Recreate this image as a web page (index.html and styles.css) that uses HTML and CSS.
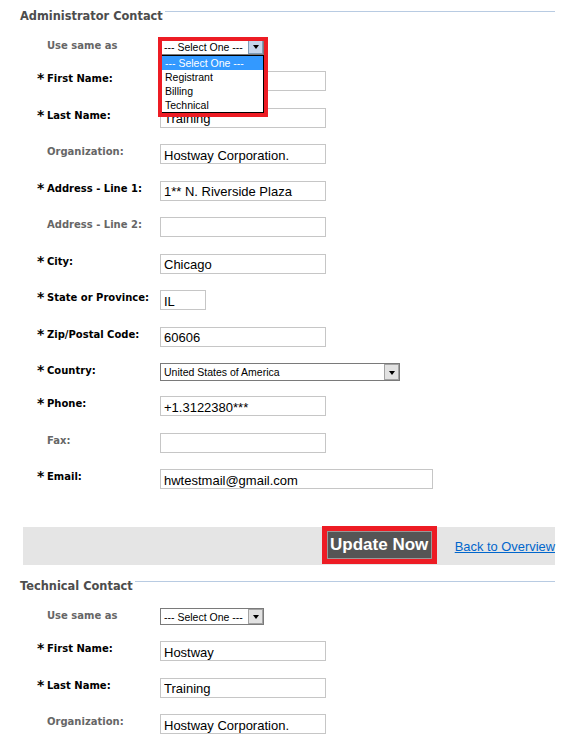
FILE: index.html
```html
<!DOCTYPE html>
<html lang="en">
<head>
    <meta charset="UTF-8">
    <title>Contact Details</title>
    <link rel="stylesheet" href="styles.css">
</head>
<body>

    <div class="page">

        <!-- Administrator contact -->
        <h3 class="legend">Administrator Contact</h3>
        <div class="rows">
            <div class="row row-select">
                <label class="label opt">Use same as</label>
                <div class="select open">
                    <span class="select-text">--- Select One ---</span>
                    <span class="arrow"></span>
                    <ul class="options">
                        <li class="active">--- Select One ---</li>
                        <li>Registrant</li>
                        <li>Billing</li>
                        <li>Technical</li>
                    </ul>
                    <div class="mark"></div>
                </div>
            </div>
            <div class="row">
                <label class="label"><span class="star">*</span>First Name:</label>
                <input class="field" type="text" value="Hostway">
            </div>
            <div class="row">
                <label class="label"><span class="star">*</span>Last Name:</label>
                <input class="field" type="text" value="Training">
            </div>
            <div class="row">
                <label class="label opt">Organization:</label>
                <input class="field" type="text" value="Hostway Corporation.">
            </div>
            <div class="row">
                <label class="label"><span class="star">*</span>Address - Line 1:</label>
                <input class="field" type="text" value="1** N. Riverside Plaza">
            </div>
            <div class="row">
                <label class="label opt">Address - Line 2:</label>
                <input class="field" type="text" value="">
            </div>
            <div class="row">
                <label class="label"><span class="star">*</span>City:</label>
                <input class="field" type="text" value="Chicago">
            </div>
            <div class="row">
                <label class="label"><span class="star">*</span>State or Province:</label>
                <input class="field field-short" type="text" value="IL">
            </div>
            <div class="row">
                <label class="label"><span class="star">*</span>Zip/Postal Code:</label>
                <input class="field" type="text" value="60606">
            </div>
            <div class="row row-country">
                <label class="label"><span class="star">*</span>Country:</label>
                <div class="select select-wide">
                    <span class="select-text">United States of America</span>
                    <span class="arrow"></span>
                </div>
            </div>
            <div class="row">
                <label class="label"><span class="star">*</span>Phone:</label>
                <input class="field" type="text" value="+1.3122380***">
            </div>
            <div class="row">
                <label class="label opt">Fax:</label>
                <input class="field" type="text" value="">
            </div>
            <div class="row">
                <label class="label"><span class="star">*</span>Email:</label>
                <input class="field field-long" type="text" value="hwtestmail@gmail.com">
            </div>
        </div>

        <div class="actions">
            <button class="update-btn">Update Now</button>
            <a class="back-link" href="#">Back to Overview</a>
        </div>

        <!-- Technical contact -->
        <h3 class="legend legend-next">Technical Contact</h3>
        <div class="rows">
            <div class="row row-select">
                <label class="label opt">Use same as</label>
                <div class="select">
                    <span class="select-text">--- Select One ---</span>
                    <span class="arrow"></span>
                </div>
            </div>
            <div class="row">
                <label class="label"><span class="star">*</span>First Name:</label>
                <input class="field" type="text" value="Hostway">
            </div>
            <div class="row">
                <label class="label"><span class="star">*</span>Last Name:</label>
                <input class="field" type="text" value="Training">
            </div>
            <div class="row">
                <label class="label opt">Organization:</label>
                <input class="field" type="text" value="Hostway Corporation.">
            </div>
        </div>

    </div>

</body>
</html>
```

FILE: styles.css
```css
html {
    overflow: hidden;
}

body {
    margin: 0;
    padding: 0;
    background: #fff;
    color: #000;
    font-family: 'DejaVu Sans', Verdana, sans-serif;
}

.page {
    width: 555px;
}

/* section headings with the rule running to the right */
.legend {
    display: flex;
    align-items: flex-start;
    margin: 9px 0 0;
    padding-left: 20px;
    font-size: 11.4px;
    line-height: 14px;
    font-weight: bold;
    color: #4d4d4d;
}

.legend::after {
    content: "";
    flex: 1;
    margin: 2px 0 0 2px;
    border-top: 1px solid #b8cbe2;
}

.legend-next {
    margin-top: 14px;
}

.rows {
    margin-top: 7px;
}

.row {
    display: flex;
    align-items: flex-start;
    padding: 8px 0 8.5px 37px;
}

.row-select {
    padding-bottom: 8px;
}

.row-country {
    padding-bottom: 7px;
}

.label {
    display: flex;
    align-items: flex-start;
    width: 123px;
    box-sizing: border-box;
    font-size: 10px;
    line-height: 12px;
    font-weight: bold;
    padding-top: 2px;
    color: #000;
}

.label.opt {
    padding-left: 10px;
    color: #666;
}

.star {
    width: 10px;
    margin-top: -2px;
    font-size: 14px;
    line-height: 14px;
}

.field {
    height: 20px;
    width: 166px;
    box-sizing: border-box;
    margin: 0;
    padding: 2px 3px 0;
    border: 1px solid #c6c6c6;
    font-family: 'Liberation Sans', Arial, sans-serif;
    font-size: 13px;
    color: #000;
    background: #fff;
}

.field-short {
    width: 46px;
}

.field-long {
    width: 273px;
}

/* fake select boxes */
.select {
    position: relative;
    display: flex;
    align-items: center;
    width: 104px;
    height: 17px;
    box-sizing: border-box;
    border: 1px solid #7a7a7a;
    background: #fff;
    font-family: 'Liberation Sans', Arial, sans-serif;
    font-size: 10.5px;
}

.select-wide {
    width: 240px;
    height: 18px;
}

.select-text {
    padding-left: 3px;
    white-space: nowrap;
}

.arrow {
    display: flex;
    align-items: center;
    justify-content: center;
    width: 15px;
    height: 100%;
    margin-left: auto;
    box-sizing: border-box;
    border: 1px solid #a3a3a3;
    background: #e2e2e2;
}

.arrow::before {
    content: "";
    border-left: 3.5px solid transparent;
    border-right: 3.5px solid transparent;
    border-top: 4px solid #000;
    margin-top: 1px;
}

.select.open .arrow {
    background: #c5d5ec;
    border-color: #7f9db9;
}

.options {
    position: absolute;
    left: -1px;
    top: 16px;
    z-index: 2;
    width: 104px;
    box-sizing: border-box;
    margin: 0;
    padding: 0;
    list-style: none;
    border: 1px solid #000;
    background: #fff;
}

.options li {
    height: 14px;
    line-height: 14px;
    padding-left: 4px;
    white-space: nowrap;
}

.options li.active {
    background: #3399ff;
    color: #fff;
}

/* red highlight drawn over the open list */
.mark {
    position: absolute;
    left: -3px;
    top: -2px;
    z-index: 3;
    width: 110px;
    height: 80px;
    box-sizing: border-box;
    border: 4px solid #ed1c24;
}

.actions {
    display: flex;
    justify-content: flex-end;
    align-items: center;
    gap: 23px;
    height: 38px;
    margin: 29.5px 0 0 23px;
    background: #e5e5e5;
}

.update-btn {
    height: 28px;
    width: 105px;
    margin-top: -2px;
    padding: 0;
    border: 1px solid #999;
    background: #555;
    color: #fff;
    font-family: 'Liberation Sans', Arial, sans-serif;
    font-size: 17px;
    font-weight: bold;
    outline: 5px solid #ed1c24;
}

.back-link {
    font-family: 'Liberation Sans', Arial, sans-serif;
    font-size: 12.9px;
    color: #0066cc;
    white-space: nowrap;
}
```
